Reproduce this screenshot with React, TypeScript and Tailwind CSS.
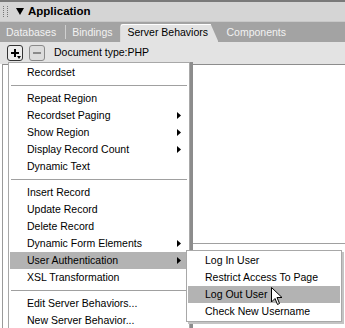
import React from "react";

const font = { fontFamily: '"Liberation Sans", Arial, sans-serif' };

type Item = { label: string; arrow?: boolean; active?: boolean } | "sep";

const items: Item[] = [
  { label: "Recordset" },
  "sep",
  { label: "Repeat Region" },
  { label: "Recordset Paging", arrow: true },
  { label: "Show Region", arrow: true },
  { label: "Display Record Count", arrow: true },
  { label: "Dynamic Text" },
  "sep",
  { label: "Insert Record" },
  { label: "Update Record" },
  { label: "Delete Record" },
  { label: "Dynamic Form Elements", arrow: true },
  { label: "User Authentication", arrow: true, active: true },
  { label: "XSL Transformation" },
  "sep",
  { label: "Edit Server Behaviors..." },
  { label: "New Server Behavior..." },
];

const sub = [
  { label: "Log In User" },
  { label: "Restrict Access To Page" },
  { label: "Log Out User", active: true },
  { label: "Check New Username" },
];

function Arrow() {
  return (
    <svg width="4" height="7" viewBox="0 0 4 7" className="absolute right-[7px] top-[5px]">
      <path d="M0 0 L4 3.5 L0 7 Z" fill="#000" />
    </svg>
  );
}

export default function App() {
  return (
    <div
      className="relative w-[345px] h-[328px] overflow-hidden bg-white text-[10.5px] text-black flex flex-col"
      style={font}
    >
      {/* Title bar */}
      <div className="h-[21px] shrink-0 bg-[#d5d5d5] border-t-2 border-[#7a7a7a] flex items-center">
        <div className="ml-[3px] w-[6px] h-[12px] grid grid-cols-2 gap-x-[1px] gap-y-[1px]">
          {Array.from({ length: 12 }).map((_, i) => (
            <div key={i} className="w-[1px] h-[1px] bg-[#777]" />
          ))}
        </div>
        <svg width="8" height="7" viewBox="0 0 8 7" className="ml-[7px]">
          <path d="M0 0 L8 0 L4 7 Z" fill="#000" />
        </svg>
        <span className="ml-[4px] font-bold text-[11.5px] leading-none">Application</span>
      </div>

      {/* Tabs */}
      <div className="h-[21px] shrink-0 bg-[#a3a3a3] border-t border-[#c8c8c8] flex items-end text-[#f2f2f2]">
        <div className="pl-[6px] h-[19px] flex items-center">Databases</div>
        <div className="ml-[9px] w-[1px] h-[14px] mb-[3px] bg-[#d0d0d0]" />
        <div className="ml-[6px] h-[19px] flex items-center">Bindings</div>
        <div className="ml-[8px] relative h-[18px] w-[98px] flex items-center">
          <div className="absolute inset-0 bg-[#e3e3e3] rounded-tl-[3px] border-t border-l border-white [clip-path:polygon(0_0,92%_0,100%_100%,0_100%)]" />
          <span className="relative pl-[7px] text-black">Server Behaviors</span>
        </div>
        <div className="ml-[8px] h-[19px] flex items-center">Components</div>
      </div>

      {/* Toolbar */}
      <div className="h-[22px] shrink-0 bg-[#e3e3e3] flex items-center">
        <div className="ml-[7px] w-[16px] h-[16px] rounded-[3px] border border-[#333] bg-[#ececec] relative flex items-center justify-center">
          <svg width="10" height="10" viewBox="0 0 10 10">
            <path d="M4 1 H6 V4 H9 V6 H6 V9 H4 V6 H1 V4 H4 Z" fill="#000" />
          </svg>
          <svg width="4" height="3" viewBox="0 0 4 3" className="absolute right-[1px] bottom-[1px]">
            <path d="M0 0 L4 0 L2 3 Z" fill="#000" />
          </svg>
        </div>
        <div className="ml-[6px] w-[16px] h-[16px] rounded-[3px] border border-[#8a8a8a] bg-[#dcdcdc] flex items-center justify-center">
          <div className="w-[8px] h-[2px] bg-[#8a8a8a]" />
        </div>
        <span className="ml-[9px]">Document type:PHP</span>
      </div>

      {/* Content */}
      <div className="flex-1 relative bg-white border-t border-[#8c8c8c] border-l border-l-[#9a9a9a] ml-[2px]">
        <div className="absolute left-[190px] right-0 top-[178px] h-[1px] bg-[#a0a0a0]" />
      </div>

      {/* Main menu */}
      <div className="absolute left-[8px] top-[62px] w-[182px] bg-white border border-[#a8a8a8] shadow-[3px_0_0_#8c8c8c] pt-[1px] px-[1px]">
        {items.map((it, i) =>
          it === "sep" ? (
            <div key={i} className="h-[9px] flex items-center px-[1px]">
              <div className="w-full h-[1px] bg-[#a0a0a0]" />
            </div>
          ) : (
            <div
              key={i}
              className={
                "relative h-[17px] flex items-center pl-[17px] whitespace-nowrap " +
                (it.active ? "bg-[#b3b3b3]" : "")
              }
            >
              {it.label}
              {it.arrow && <Arrow />}
            </div>
          )
        )}
      </div>

      {/* Submenu */}
      <div className="absolute left-[186px] top-[250px] w-[156px] bg-white border border-[#a8a8a8] shadow-[2px_2px_0_#c4c4c4] py-[1px] px-[1px]">
        {sub.map((it, i) => (
          <div
            key={i}
            className={
              "h-[17px] flex items-center pl-[17px] whitespace-nowrap " +
              (it.active ? "bg-[#b3b3b3]" : "")
            }
          >
            {it.label}
          </div>
        ))}
      </div>

      {/* Cursor */}
      <svg
        width="12"
        height="19"
        viewBox="0 0 12 19"
        className="absolute left-[271px] top-[287px]"
      >
        <path d="M0.5 0.5 L0.5 15 L4 11.5 L6.5 17.5 L8.5 16.5 L6 10.5 L11 10.5 Z" fill="#fff" stroke="#000" strokeWidth="1" />
      </svg>
    </div>
  );
}
